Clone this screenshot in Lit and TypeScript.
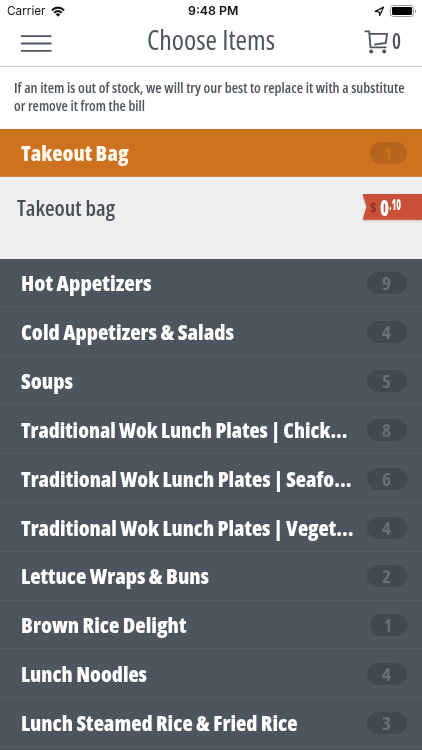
import { LitElement, html, css } from "lit";
import { customElement, property, state } from "lit/decorators.js";
import { styleMap } from "lit/directives/style-map.js";
import { classMap } from "lit/directives/class-map.js";

/** A single line of text condensed horizontally to a given width. */
@customElement("fit-text")
class FitText extends LitElement {
  static styles = css`
    :host { display: block; flex: none; white-space: nowrap; }
    .box { display: block; }
    .line { display: inline-block; transform-origin: 0 50%; }
  `;
  @property() text = "";
  @property({ type: Number }) width = 100;
  @state() scale = 1;

  firstUpdated() {
    this.measure();
    document.fonts.ready.then(() => this.measure());
  }
  measure() {
    const line = this.renderRoot.querySelector(".line") as HTMLElement;
    const natural = parseFloat(getComputedStyle(line).width);
    if (natural > 0) this.scale = this.width / natural;
  }
  render() {
    return html`<span class="box" style=${styleMap({ width: `${this.width}px` })}
      ><span class="line" style=${styleMap({ transform: `scaleX(${this.scale})` })}>${this.text}</span></span>`;
  }
}

@customElement("category-row")
class CategoryRow extends LitElement {
  static styles = css`
    :host { display: block; flex: none; }
    .row {
      box-sizing: border-box; height: 48.87px; padding: 1.5px 15.5px 0 20.5px;
      display: flex; align-items: center; justify-content: space-between;
      background: #4d555e; border-bottom: 1px solid #565f68; color: #fff;
      font-size: 21px; font-weight: 800; line-height: 28px; word-spacing: -0.3px;
    }
    .active { background: #cd721e; border-bottom-color: #d58a49; color: #fff8ee; }
    .badge {
      width: 39.5px; height: 22px; border-radius: 11px; background: #434951; color: #68717a;
      display: flex; align-items: center; justify-content: center;
      font-size: 18px; font-weight: 700; line-height: 22px;
    }
    .narrow { width: 36.5px; }
    .active .badge { background: #b5651c; color: #cd721e; }
  `;
  @property() name = "";
  @property({ type: Number }) count = 0;
  @property({ type: Number }) textWidth = 100;
  @property({ type: Boolean }) active = false;
  render() {
    return html`<div class=${classMap({ row: true, active: this.active })}>
      <fit-text .text=${this.name} .width=${this.textWidth}></fit-text>
      <div class=${classMap({ badge: true, narrow: this.count === 1 })}>
        <fit-text .text=${String(this.count)} .width=${this.count === 1 ? 8 : 9}></fit-text>
      </div>
    </div>`;
  }
}

@customElement("app-root")
class AppRoot extends LitElement {
  static styles = css`
    :host {
      display: flex; flex-direction: column; width: 422px; height: 750px; overflow: hidden;
      background: #4d555e; color: #4d5660;
      font-family: "Open Sans", "Noto Sans", sans-serif; font-stretch: 75%;
    }
    .status {
      display: grid; grid-template-columns: 1fr auto 1fr; align-items: center; flex: none;
      height: 22px; padding: 0 5px 0 7px; background: #fff; color: #111; font-stretch: 100%;
      font-family: Inter, "Liberation Sans", sans-serif; font-size: 12px; line-height: 20px;
    }
    .carrier { display: flex; align-items: center; gap: 5px; }
    .time { font-weight: 600; padding-left: 2px; }
    .power { display: flex; align-items: center; justify-content: flex-end; gap: 5px; }
    .nav {
      display: flex; align-items: center; box-sizing: border-box; flex: none; background: #fff;
      height: 44.5px; padding: 0 21px; border-bottom: 1.5px solid #d2d3d5;
    }
    .menu { width: 31px; height: 17px; margin-top: -1px; }
    .title { margin: -8px 0 0 95px; font-size: 26.5px; font-weight: 400; line-height: 36px; }
    .cart { display: flex; align-items: center; gap: 3px; margin: -4px 0 0 89.5px; }
    .total { font-size: 22px; font-weight: 600; line-height: 28px; margin-top: -3px; }
    .notice {
      box-sizing: border-box; flex: none; height: 62px; padding: 12.6px 0 0 13.5px; background: #fff;
      font-size: 14px; font-weight: 600; line-height: 18px; color: #4d555e;
    }
    .item {
      box-sizing: border-box; flex: none; height: 81.2px; padding: 16px 0 0 16.5px;
      display: flex; justify-content: space-between; align-items: flex-start;
      background: #eeeff1; color: #4b4f54; font-size: 21.5px; font-weight: 550; line-height: 30px;
    }
    .price {
      width: 59.5px; height: 26px; box-sizing: border-box; padding-left: 7.5px; margin-top: 0.5px;
      display: flex; align-items: flex-start; background: #cb5039; color: #fff; font-weight: 800;
      clip-path: polygon(0 0, 100% 0, 100% 100%, 0 100%, 4px 50%);
    }
    .shade { filter: drop-shadow(0 1px 1px rgba(90, 40, 30, 0.3)); }
    .currency { font-size: 14px; line-height: 27px; color: #8a3326; font-weight: 700; }
    .whole { font-size: 22px; line-height: 27px; margin-left: 3px; }
    .cents { font-size: 15px; line-height: 20px; }
  `;

  private categories: [string, number, number][] = [
    ["Hot Appetizers", 9, 130.5],
    ["Cold Appetizers & Salads", 4, 213],
    ["Soups", 5, 52],
    ["Traditional Wok Lunch Plates | Chick...", 8, 326.5],
    ["Traditional Wok Lunch Plates | Seafo...", 6, 330.5],
    ["Traditional Wok Lunch Plates | Veget...", 4, 332.5],
    ["Lettuce Wraps & Buns", 2, 188],
    ["Brown Rice Delight", 1, 165.5],
    ["Lunch Noodles", 4, 126],
    ["Lunch Steamed Rice & Fried Rice", 3, 276.5],
  ];

  render() {
    return html`
      <div class="status">
        <div class="carrier">
          <fit-text .text=${"Carrier"} .width=${38.5}></fit-text>
          <svg width="14" height="11" viewBox="0 0 15 11" fill="none" stroke="#111" stroke-width="2.2">
            <path d="M1 4.3C4.8.4 10.2.4 14 4.3M3.4 6.9c2.5-2.5 5.7-2.5 8.2 0" />
            <path d="M5 8.4c1.6-1.5 3.4-1.5 5 0L7.5 11z" fill="#111" stroke="none" />
          </svg>
        </div>
        <div class="time"><fit-text .text=${"9:48 PM"} .width=${50.5}></fit-text></div>
        <div class="power">
          <svg width="11" height="11" viewBox="0 0 11 11" fill="none" stroke="#111" stroke-width="1.2" stroke-linejoin="round">
            <path d="M1.2 5.4 9.6 1.1 5.7 9.5 5.2 5.8z" />
          </svg>
          <svg width="27" height="12" viewBox="0 0 27 12">
            <rect x="0.5" y="0.5" width="23" height="11" rx="2.8" fill="#fff" stroke="#999" />
            <rect x="2" y="2" width="20" height="8" rx="1.3" fill="#000" />
            <path d="M25 4v4c1.5-.5 1.5-3.5 0-4z" fill="#999" />
          </svg>
        </div>
      </div>
      <div class="nav">
        <svg class="menu" viewBox="0 0 31 17" stroke="#4d5660" stroke-width="2">
          <path d="M0 1h31M0 8.5h31M0 16h31" />
        </svg>
        <div class="title"><fit-text .text=${"Choose Items"} .width=${128}></fit-text></div>
        <div class="cart">
          <svg width="25" height="24" viewBox="0 0 25 24" fill="none" stroke="#4d5660" stroke-width="1.8" stroke-linejoin="round">
            <path d="M.5 1.4H5.2L6.5 17.4h16M5.4 3.8h17.7l-1.3 9.2-11.6 1.6" />
            <circle cx="7.2" cy="21.6" r="2" fill="#4d5660" stroke="none" />
            <circle cx="20.2" cy="21.6" r="2" fill="#4d5660" stroke="none" />
          </svg>
          <div class="total"><fit-text .text=${"0"} .width=${9}></fit-text></div>
        </div>
      </div>
      <div class="notice">
        <fit-text .text=${"If an item is out of stock, we will try our best to replace it with a substitute"} .width=${390.5}></fit-text>
        <fit-text .text=${"or remove it from the bill"} .width=${131}></fit-text>
      </div>
      <category-row .name=${"Takeout Bag"} .count=${1} .textWidth=${107.5} .active=${true}></category-row>
      <div class="item">
        <fit-text .text=${"Takeout bag"} .width=${98}></fit-text>
        <div class="shade"><div class="price">
          <div class="currency"><fit-text .text=${"$"} .width=${6.5}></fit-text></div>
          <div class="whole"><fit-text .text=${"0"} .width=${9}></fit-text></div>
          <div class="cents"><fit-text .text=${".10"} .width=${12}></fit-text></div>
        </div></div>
      </div>
      ${this.categories.map(
        ([name, count, width]) =>
          html`<category-row .name=${name} .count=${count} .textWidth=${width}></category-row>`
      )}
    `;
  }
}
